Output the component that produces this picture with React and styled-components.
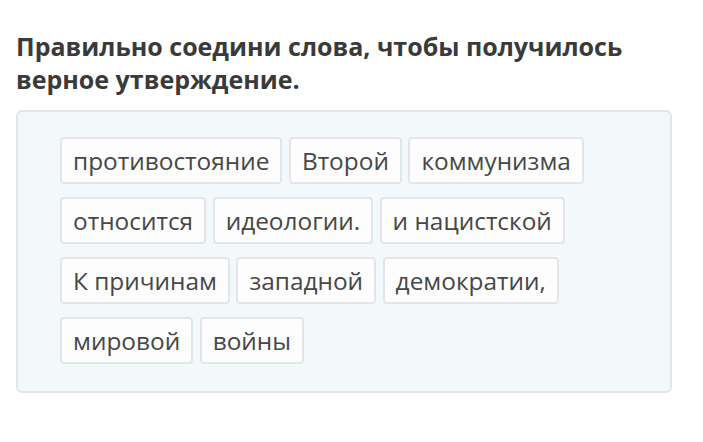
import React from "react";
import styled, { createGlobalStyle } from "styled-components";

const Global = createGlobalStyle`
  html, body { margin: 0; padding: 0; background: #ffffff; }
  body { font-family: "Open Sans", "Noto Sans", sans-serif; }
`;

const Page = styled.div`
  width: 703px;
  height: 442px;
  padding: 30px 16px 0 16px;
  box-sizing: border-box;
  background: #ffffff;
`;

const Title = styled.h1`
  margin: 0 0 14px 0;
  font-size: 25px;
  line-height: 33px;
  font-weight: 700;
  color: #3a3a3a;
  white-space: nowrap;
`;

const Panel = styled.div`
  width: 656px;
  box-sizing: border-box;
  border: 2px solid #e2e6e9;
  border-radius: 6px;
  background: #f3f8fb;
  padding: 25px 42px 27px 42px;
`;

const Words = styled.div`
  display: flex;
  flex-wrap: wrap;
  gap: 13px 6.5px;
`;

const Chip = styled.div`
  box-sizing: border-box;
  height: 47px;
  padding: 0 11px;
  display: flex;
  align-items: center;
  border: 2px solid #e3e5e6;
  border-radius: 4px;
  background: #fdfdfd;
  font-size: 24.4px;
  color: #474747;
  white-space: nowrap;
`;

const words = [
  "противостояние",
  "Второй",
  "коммунизма",
  "относится",
  "идеологии.",
  "и нацистской",
  "К причинам",
  "западной",
  "демократии,",
  "мировой",
  "войны",
];

export default function App() {
  return (
    <>
      <Global />
      <Page>
        <Title>
          Правильно соедини слова, чтобы получилось
          <br />
          верное утверждение.
        </Title>
        <Panel>
          <Words>
            {words.map((w) => (
              <Chip key={w}>{w}</Chip>
            ))}
          </Words>
        </Panel>
      </Page>
    </>
  );
}
